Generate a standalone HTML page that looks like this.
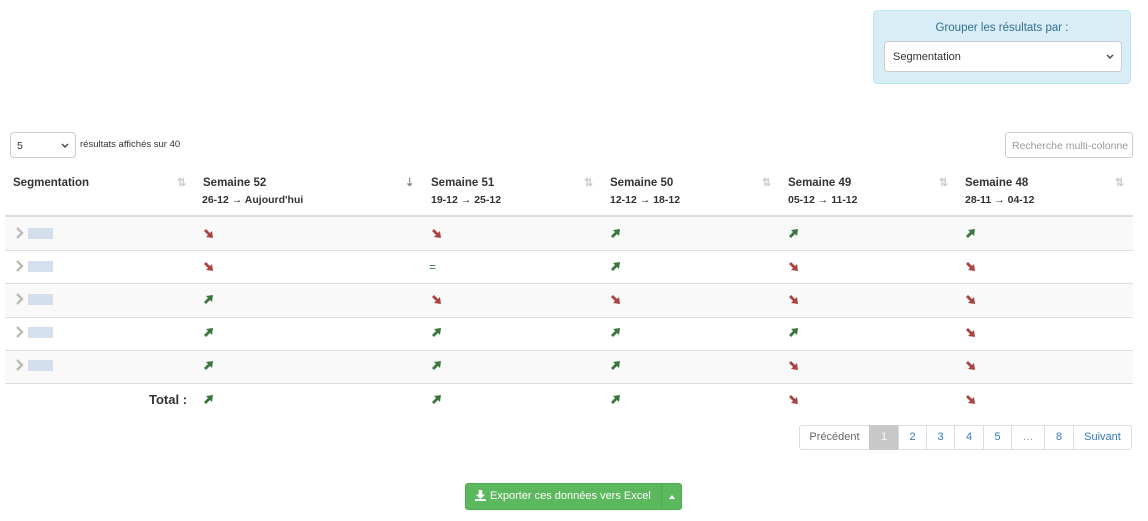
<!DOCTYPE html><html><head><meta charset="utf-8"><style>
body{margin:0;width:1148px;height:521px;background:#fff;font-family:"Liberation Sans",sans-serif;font-size:12px;color:#333;position:relative;overflow:hidden}
.a{position:absolute}
.grp{left:873px;top:10px;width:258px;height:74px;background:#d9edf7;border:1px solid #bce8f1;border-radius:4px;box-sizing:border-box}
.sel{background:#fff;border:1px solid #ccc;border-radius:4px;box-sizing:border-box}
.th{font-weight:bold;font-size:11.5px;color:#333}
.sub{font-weight:bold;font-size:10.5px}
.row{left:5px;width:1128px;height:33px;border-top:1px solid #ddd;box-sizing:border-box}
.pg{position:absolute;top:425px;height:25px;border:1px solid #ddd;box-sizing:border-box;font-size:11px;color:#337ab7;text-align:center;line-height:23px;margin-left:-1px}
.sort{color:#ccc;font-size:11px;font-weight:bold}
</style></head><body>
<div class="a grp"><div class="a" style="left:0;width:256px;top:11px;text-align:center;color:#31708f;font-size:11.5px">Grouper les résultats par :</div>
<div class="a sel" style="left:10px;top:30px;width:238px;height:31px;padding:9px 8px;font-size:11px;color:#333">Segmentation<svg class="a" style="right:7px;top:12px" width="8" height="6" viewBox="0 0 8 6"><path d="M1 1l3 3 3-3" stroke="#444" stroke-width="1.4" fill="none"/></svg></div></div>

<div class="a sel" style="left:10px;top:132px;width:66px;height:26px;padding:7px 6px;font-size:10.5px">5<svg class="a" style="right:6px;top:10px" width="8" height="6" viewBox="0 0 8 6"><path d="M1 1l3 3 3-3" stroke="#444" stroke-width="1.4" fill="none"/></svg></div>
<div class="a" style="left:80px;top:139px;font-size:9.5px">résultats affichés sur 40</div>
<div class="a sel" style="left:1005px;top:132px;width:128px;height:26px;padding:7px 6px;font-size:10.5px;color:#999;overflow:hidden;white-space:nowrap;border-radius:3px">Recherche multi-colonne</div>

<div class="a th" style="left:13px;top:177px">Segmentation</div><div class="a sort" style="left:177px;top:176px">⇅</div>
<div class="a th" style="left:203px;top:177px">Semaine 52</div><div class="a sub" style="left:202px;top:194px">26-12 → Aujourd'hui</div><div class="a sort" style="left:405px;top:176px;color:#888">⇣</div>
<div class="a th" style="left:431px;top:177px">Semaine 51</div><div class="a sub" style="left:431px;top:194px">19-12 → 25-12</div><div class="a sort" style="left:584px;top:176px">⇅</div>
<div class="a th" style="left:610px;top:177px">Semaine 50</div><div class="a sub" style="left:610px;top:194px">12-12 → 18-12</div><div class="a sort" style="left:762px;top:176px">⇅</div>
<div class="a th" style="left:788px;top:177px">Semaine 49</div><div class="a sub" style="left:788px;top:194px">05-12 → 11-12</div><div class="a sort" style="left:939px;top:176px">⇅</div>
<div class="a th" style="left:965px;top:177px">Semaine 48</div><div class="a sub" style="left:965px;top:194px">28-11 → 04-12</div><div class="a sort" style="left:1115px;top:176px">⇅</div>

<div class="a" style="left:5px;top:215px;width:1128px;height:2px;background:#ddd"></div>
<div class="a row" style="top:217px;background:#f9f9f9;border-top:none"></div>
<div class="a row" style="top:250px"></div>
<div class="a row" style="top:283px;background:#f9f9f9"></div>
<div class="a row" style="top:317px"></div>
<div class="a row" style="top:350px;background:#f9f9f9"></div>
<div class="a row" style="top:383px"></div>

<div id="cells"></div>
<div class="a" style="left:149px;top:392px;font-weight:bold;font-size:13px">Total :</div>

<div class="pg" style="left:800px;width:71px;color:#666;border-radius:3px 0 0 3px">Précédent</div>
<div class="pg" style="left:870px;width:30px;background:#c8c8c8;color:#fff;border-color:#c8c8c8">1</div>
<div class="pg" style="left:899px;width:29px">2</div>
<div class="pg" style="left:927px;width:29px">3</div>
<div class="pg" style="left:955px;width:30px">4</div>
<div class="pg" style="left:984px;width:29px">5</div>
<div class="pg" style="left:1012px;width:34px;color:#999">…</div>
<div class="pg" style="left:1045px;width:30px">8</div>
<div class="pg" style="left:1074px;width:59px;border-radius:0 3px 3px 0">Suivant</div>

<div class="a" style="left:465px;top:483px;width:217px;height:27px;background:#5cb85c;border:1px solid #4cae4c;border-radius:3px;box-sizing:border-box;color:#fff;font-size:11px;white-space:nowrap">
<svg class="a" style="left:9px;top:6px" width="11" height="11" viewBox="0 0 12 12"><path d="M4 0h4v5h3L6 10 1 5h3z M0 10h12v2H0z" fill="#fff"/></svg>
<span class="a" style="left:24px;top:6px">Exporter ces données vers Excel</span>
<div class="a" style="left:195px;top:0;width:1px;height:25px;background:#4cae4c"></div>
<svg class="a" style="left:203px;top:11px" width="6" height="4" viewBox="0 0 6 4"><path d="M0 4L3 0 6 4z" fill="#fff"/></svg></div>

<script>
var d=["DDUUU","D=UDD","UDDDD","UUUUD","UUUDD","UUUDD"];
var xs=[203,431,610,788,965],ys=[228,261,294,327,360,394];
var h="";
for(var r=0;r<6;r++){
 if(r<5){h+='<svg class="a" style="left:15px;top:'+(ys[r]-1)+'px" width="9" height="12" viewBox="0 0 9 12"><path d="M2 1l5 5-5 5" stroke="#bbb" stroke-width="2.4" fill="none"/></svg><div class="a" style="left:28px;top:'+(ys[r])+'px;width:25px;height:11px;background:#c9d8ea;opacity:.8"></div>';}
 for(var c=0;c<5;c++){var v=d[r][c];
  if(v=="=")h+='<div class="a" style="left:'+(xs[c]-2)+'px;top:'+(ys[r]-1)+'px;color:#3c763d;font-size:12px">=</div>';
  else if(v=="D")h+='<svg class="a" style="left:'+xs[c]+'px;top:'+ys[r]+'px" width="11" height="11" viewBox="0 0 11 11"><path d="M1 3L3 1 7 5 9 3 10 10 3 9 5 7z" fill="#a94442"/></svg>';
  else h+='<svg class="a" style="left:'+xs[c]+'px;top:'+ys[r]+'px" width="11" height="11" viewBox="0 0 11 11"><path d="M1 8L3 10 7 6 9 8 10 1 3 2 5 4z" fill="#3c763d"/></svg>';
 }}
document.getElementById("cells").innerHTML=h;
</script>
</body></html>
